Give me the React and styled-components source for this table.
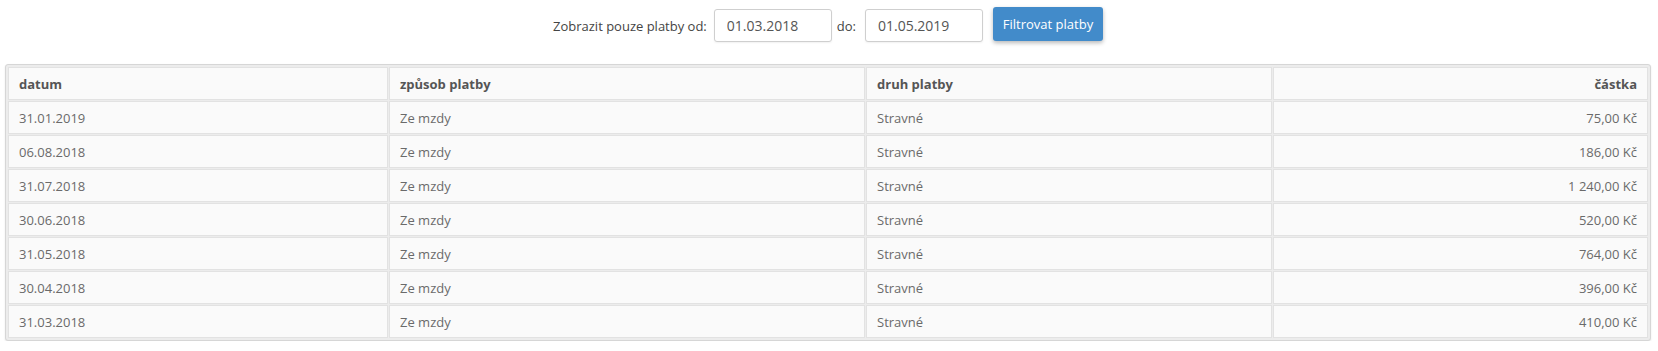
import React from "react";
import styled, { createGlobalStyle } from "styled-components";

const Global = createGlobalStyle`
  html, body { margin: 0; padding: 0; background: #fff; }
  body { font-family: "Open Sans", "Noto Sans", sans-serif; color: #555; }
`;

const Page = styled.div`
  padding: 9px 7px 0 5px;
`;

const FilterBar = styled.form`
  display: flex;
  align-items: center;
  justify-content: center;
  height: 33px;
  font-size: 13px;
  color: #444;
`;

const Label = styled.span`
  margin-right: ${(p) => p.$gap || 7}px;
  margin-left: ${(p) => p.$lead || 0}px;
`;

const DateInput = styled.input`
  box-sizing: border-box;
  width: 118px;
  height: 33px;
  padding: 0 12px;
  border: 1px solid #cfcfcf;
  border-radius: 3px;
  box-shadow: 0 1px 2px rgba(0, 0, 0, 0.06);
  font-family: inherit;
  font-size: 14px;
  color: #555;
  background: #fff;
  outline: none;
`;

const Button = styled.button`
  box-sizing: border-box;
  margin-left: 10px;
  margin-top: -3px;
  width: 110px;
  height: 34px;
  padding: 0 8px;
  border: none;
  border-radius: 3px;
  background: #428bca;
  color: #fff;
  font-family: inherit;
  font-size: 13px;
  box-shadow: 0 2px 4px rgba(0, 0, 0, 0.28);
  cursor: pointer;
`;

const TableWrap = styled.div`
  margin-top: 22px;
  border: 1px solid #d6d6d6;
  border-radius: 3px;
  padding: 1px;
  background: #ececec;
  box-shadow: 0 1px 2px rgba(0, 0, 0, 0.1);
`;

const Table = styled.table`
  width: 100%;
  border-collapse: separate;
  border-spacing: 1px;
  font-size: 13px;
  table-layout: fixed;
`;

const Cell = styled.td`
  box-sizing: border-box;
  height: 33px;
  padding: 0 10px;
  border: 1px solid #e2e2e2;
  background: #fafafa;
  color: ${(p) => (p.$head ? "#555" : "#6a6a6a")};
  font-weight: ${(p) => (p.$head ? 700 : 400)};
  text-align: ${(p) => (p.$right ? "right" : "left")};
  white-space: nowrap;
`;

const rows = [
  ["31.01.2019", "Ze mzdy", "Stravné", "75,00 Kč"],
  ["06.08.2018", "Ze mzdy", "Stravné", "186,00 Kč"],
  ["31.07.2018", "Ze mzdy", "Stravné", "1 240,00 Kč"],
  ["30.06.2018", "Ze mzdy", "Stravné", "520,00 Kč"],
  ["31.05.2018", "Ze mzdy", "Stravné", "764,00 Kč"],
  ["30.04.2018", "Ze mzdy", "Stravné", "396,00 Kč"],
  ["31.03.2018", "Ze mzdy", "Stravné", "410,00 Kč"],
];

export default function App() {
  return (
    <Page>
      <Global />
      <FilterBar onSubmit={(e) => e.preventDefault()}>
        <Label>Zobrazit pouze platby od:</Label>
        <DateInput defaultValue="01.03.2018" />
        <Label $lead={5} $gap={9}>do:</Label>
        <DateInput defaultValue="01.05.2019" />
        <Button type="submit">Filtrovat platby</Button>
      </FilterBar>
      <TableWrap>
        <Table>
          <colgroup>
            <col style={{ width: "380px" }} />
            <col style={{ width: "476px" }} />
            <col style={{ width: "406px" }} />
            <col />
          </colgroup>
          <thead>
            <tr>
              <Cell as="th" $head>datum</Cell>
              <Cell as="th" $head>způsob platby</Cell>
              <Cell as="th" $head>druh platby</Cell>
              <Cell as="th" $head $right>částka</Cell>
            </tr>
          </thead>
          <tbody>
            {rows.map((r, i) => (
              <tr key={i}>
                <Cell>{r[0]}</Cell>
                <Cell>{r[1]}</Cell>
                <Cell>{r[2]}</Cell>
                <Cell $right>{r[3]}</Cell>
              </tr>
            ))}
          </tbody>
        </Table>
      </TableWrap>
    </Page>
  );
}
